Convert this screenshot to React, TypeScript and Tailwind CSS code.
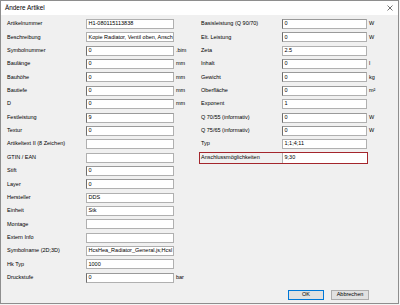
import React from "react";

type F = { label: string; value?: string; unit?: string; dark?: boolean };

const left: F[] = [
  { label: "Artikelnummer", value: "H1-080115113838" },
  { label: "Beschreibung", value: "Kopie Radiator, Ventil oben, Ansch" },
  { label: "Symbolnummer", value: "0", unit: ".bim", dark: true },
  { label: "Baulänge", value: "0", unit: "mm", dark: true },
  { label: "Bauhöhe", value: "0", unit: "mm", dark: true },
  { label: "Bautiefe", value: "0", unit: "mm", dark: true },
  { label: "D", value: "0", unit: "mm", dark: true },
  { label: "Festleistung", value: "9", dark: true },
  { label: "Textur", value: "0", dark: true },
  { label: "Artikeltext II (8 Zeichen)", value: "" },
  { label: "GTIN / EAN", value: "" },
  { label: "Stift", value: "0", dark: true },
  { label: "Layer", value: "0", dark: true },
  { label: "Hersteller", value: "DDS" },
  { label: "Einheit", value: "Stk" },
  { label: "Montage", value: "" },
  { label: "Extern Info", value: "" },
  { label: "Symbolname (2D;3D)", value: "HcsHea_Radiator_General.js;Hcsl" },
  { label: "Hk Typ", value: "1000" },
  { label: "Druckstufe", value: "0", unit: "bar", dark: true },
];

const right: F[] = [
  { label: "Basisleistung (Q 90/70)", value: "0", unit: "W", dark: true },
  { label: "Elt. Leistung", value: "0", unit: "W", dark: true },
  { label: "Zeta", value: "2.5" },
  { label: "Inhalt", value: "0", unit: "l", dark: true },
  { label: "Gewicht", value: "0", unit: "kg", dark: true },
  { label: "Oberfläche", value: "0", unit: "m²", dark: true },
  { label: "Exponent", value: "1" },
  { label: "Q 70/55 (informativ)", value: "0", unit: "W", dark: true },
  { label: "Q 75/65 (informativ)", value: "0", unit: "W", dark: true },
  { label: "Typ", value: "1;1;4;11" },
];

function Box({ value, dark, w }: { value?: string; dark?: boolean; w: string }) {
  return (
    <div
      className={`${w} h-[10px] shrink-0 bg-white border border-[#b0b0b0] ${
        dark ? "border-l-[#6e6e6e] border-t-[#9a9a9a]" : ""
      } pl-[1.5px] flex items-center overflow-hidden whitespace-nowrap`}
    >
      {value}
    </div>
  );
}

export default function App() {
  return (
    <div
      className="w-[400px] h-[305px] bg-[#f4f4f4] text-[5.5px] leading-none text-black"
      style={{ fontFamily: '"Liberation Sans", Arial, sans-serif' }}
    >
      <div className="w-[399px] h-[304px] border border-[#8e8e8e] flex flex-col bg-[#f0f0f0]">
        <div className="h-[14px] bg-white flex items-center justify-between pl-[4px] pr-[4px] shrink-0">
          <span className="text-[6.4px] text-black">Ändere Artikel</span>
          <svg width="6" height="6" viewBox="0 0 6 6" className="mr-[1px]">
            <path d="M0.5 0.5 L5.5 5.5 M5.5 0.5 L0.5 5.5" stroke="#333" strokeWidth="0.7" />
          </svg>
        </div>
        <div className="flex-1 flex flex-col">
          <div className="flex pt-[4px]">
            <div className="w-[198px] shrink-0 pl-[6px] flex flex-col">
              {left.map((f) => (
                <div key={f.label} className="flex items-center h-[10px] mb-[3.37px]">
                  <div className="w-[79px] shrink-0 whitespace-nowrap">{f.label}</div>
                  <Box value={f.value} dark={f.dark} w="w-[88px]" />
                  {f.unit && <span className="ml-[2px] whitespace-nowrap">{f.unit}</span>}
                </div>
              ))}
            </div>
            <div className="flex flex-col">
              {right.map((f) => (
                <div key={f.label} className="flex items-center h-[10px] mb-[3.37px]">
                  <div className="w-[83px] shrink-0 pl-[2px] whitespace-nowrap">{f.label}</div>
                  <Box value={f.value} dark={f.dark} w="w-[85px]" />
                  {f.unit && <span className="ml-[2px] whitespace-nowrap">{f.unit}</span>}
                </div>
              ))}
              <div className="flex items-center h-[12px] -my-[1px] w-[169px] border border-[#a4262c]">
                <div className="w-[82px] shrink-0 pl-[1px] whitespace-nowrap">Anschlussmöglichkeiten</div>
                <div className="w-[85px] h-[10px] bg-white border-l border-[#b0b0b0] pl-[1.5px] flex items-center">
                  9;30
                </div>
              </div>
            </div>
          </div>
          <div className="mt-auto flex justify-end gap-[7px] pr-[29px] pb-[3px]">
            <button className="w-[36px] h-[10px] bg-[#e1e1e1] border border-[#0078d7] flex items-center justify-center text-[5.5px]">
              OK
            </button>
            <button className="w-[38px] h-[10px] bg-[#e1e1e1] border border-[#adadad] flex items-center justify-center text-[5.5px]">
              Abbrechen
            </button>
          </div>
        </div>
      </div>
    </div>
  );
}
